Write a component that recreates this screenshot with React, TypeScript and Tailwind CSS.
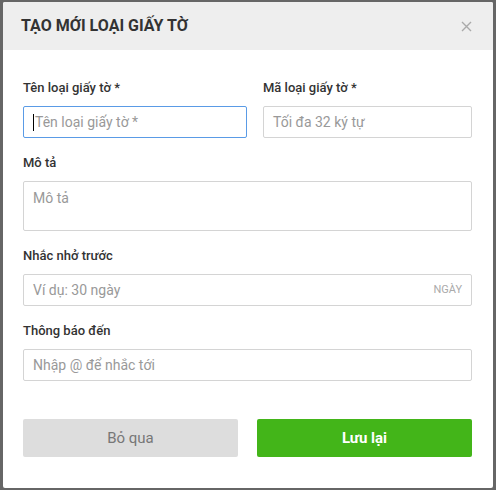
export default function App() {
  const font = { fontFamily: "Roboto, 'Liberation Sans', sans-serif" };

  return (
    <div
      className="w-[496px] h-[490px] bg-[#666666] pt-[2px] pl-[3px] overflow-hidden"
      style={font}
    >
      <div className="w-[490px] h-[486px] bg-white rounded-[2px] overflow-hidden flex flex-col">
        {/* Header */}
        <div className="h-[48px] bg-[#eeeeee] flex items-center justify-between pl-[18px] pr-[21px]">
          <h2 className="text-[16px] font-bold text-[#333333] uppercase">
            Tạo mới loại giấy tờ
          </h2>
          <button className="text-[#aaaaaa] w-[12px] h-[12px] flex items-center justify-center">
            <svg width="11" height="11" viewBox="0 0 11 11">
              <path d="M1 1L10 10M10 1L1 10" stroke="currentColor" strokeWidth="1.4" />
            </svg>
          </button>
        </div>

        {/* Body */}
        <div className="pl-[20px] pr-[21px] pt-[30px]">
          <div className="grid grid-cols-[224px_1fr] gap-x-4">
            <div>
              <label className="block text-[13px] font-medium text-[#333333] leading-[16px] mb-[10px]">
                Tên loại giấy tờ *
              </label>
              <div className="h-[32px] border border-[#5a9be6] rounded-[2px] flex items-center px-[9px] text-[14px] text-[#999999]">
                <span className="w-px h-[17px] bg-black mr-px" />
                Tên loại giấy tờ *
              </div>
            </div>
            <div>
              <label className="block text-[13px] font-medium text-[#333333] leading-[16px] mb-[10px]">
                Mã loại giấy tờ *
              </label>
              <div className="h-[32px] border border-[#d4d4d4] rounded-[2px] flex items-center px-[9px] text-[14px] text-[#999999]">
                Tối đa 32 ký tự
              </div>
            </div>
          </div>

          <label className="block text-[13px] font-medium text-[#333333] leading-[16px] mt-[17px] mb-[10px]">
            Mô tả
          </label>
          <div className="h-[50px] border border-[#d4d4d4] rounded-[2px] px-[9px] pt-[6px] text-[14px] text-[#999999]">
            Mô tả
          </div>

          <label className="block text-[13px] font-medium text-[#333333] leading-[16px] mt-[17px] mb-[10px]">
            Nhắc nhở trước
          </label>
          <div className="h-[32px] border border-[#d4d4d4] rounded-[2px] flex items-center justify-between px-[9px] text-[14px] text-[#999999]">
            <span>Ví dụ: 30 ngày</span>
            <span className="text-[11px] text-[#aaaaaa] uppercase">Ngày</span>
          </div>

          <label className="block text-[13px] font-medium text-[#333333] leading-[16px] mt-[17px] mb-[10px]">
            Thông báo đến
          </label>
          <div className="h-[32px] border border-[#d4d4d4] rounded-[2px] flex items-center px-[9px] text-[14px] text-[#999999]">
            Nhập @ để nhắc tới
          </div>

          <div className="grid grid-cols-2 gap-x-[19px] mt-[38px]">
            <button className="h-[38px] bg-[#dddddd] rounded-[2px] text-[15px] text-[#777777]">
              Bỏ qua
            </button>
            <button className="h-[38px] bg-[#43b519] rounded-[2px] text-[15px] font-bold text-white">
              Lưu lại
            </button>
          </div>
        </div>
      </div>
    </div>
  );
}
